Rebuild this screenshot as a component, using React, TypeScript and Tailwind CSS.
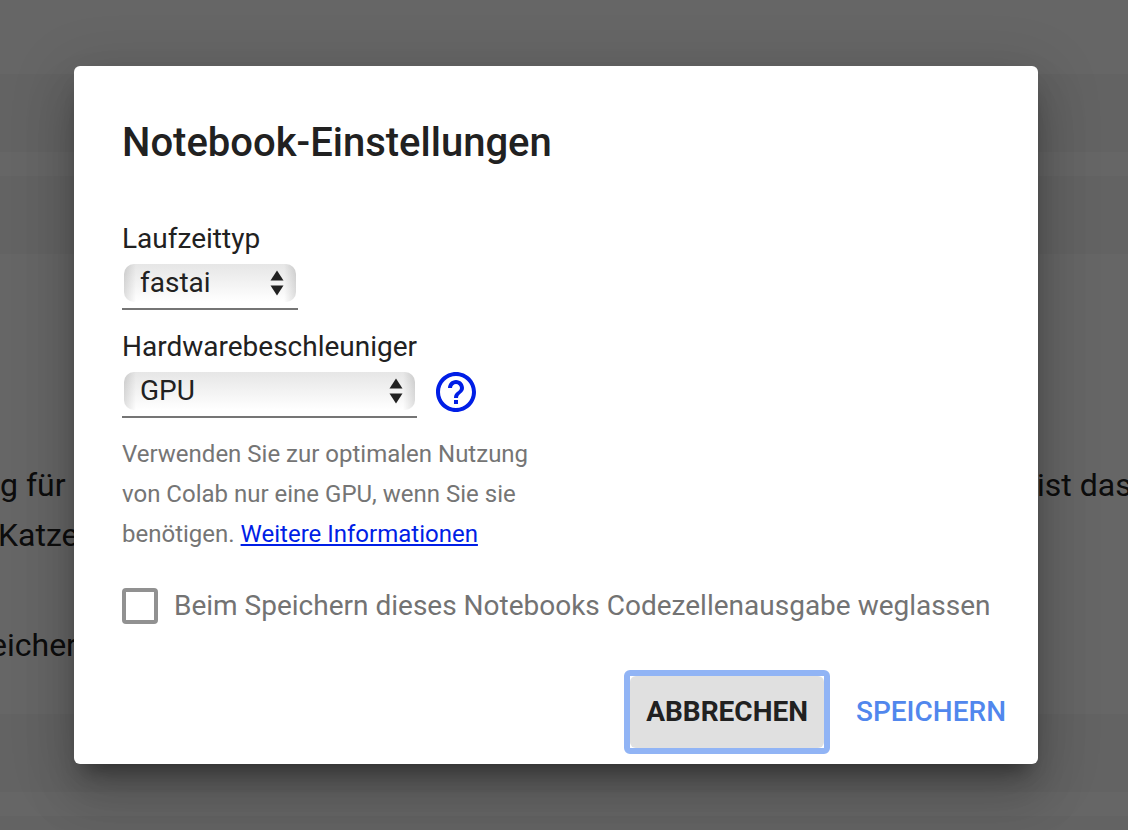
import { MdHelpOutline } from "react-icons/md";

type SelectFieldProps = {
  id: string;
  label: string;
  options: string[];
  widthClass: string;
};

function SelectField({ id, label, options, widthClass }: SelectFieldProps) {
  return (
    <div>
      <label htmlFor={id} className="block text-[28px] leading-[42px]">
        {label}
      </label>
      <div className={`relative border-b-2 border-[#757575] px-[2px] pt-1 pb-[6px] ${widthClass}`}>
        <select
          id={id}
          className="block h-[38px] w-full appearance-none rounded-[10px] bg-[linear-gradient(90deg,rgba(0,0,0,0.12),transparent_12px),linear-gradient(270deg,rgba(0,0,0,0.12),transparent_12px),linear-gradient(180deg,#e6e6e6,#ffffff)] px-4 text-[28px] leading-[38px] text-[#212121]"
        >
          {options.map((option) => (
            <option key={option}>{option}</option>
          ))}
        </select>
        <svg
          viewBox="0 0 14 26"
          className="pointer-events-none absolute top-[10px] right-[14px] h-[26px] w-[14px] fill-[#212121]"
          aria-hidden="true"
        >
          <path d="M7 0.5 L13.5 10.5 H0.5 Z" />
          <path d="M7 25.5 L13.5 15.5 H0.5 Z" />
        </svg>
      </div>
    </div>
  );
}

function NotebookBackdrop() {
  return (
    <div
      className="absolute inset-0 flex flex-col overflow-hidden bg-white text-[32px] leading-[50px] whitespace-nowrap text-[#212121]"
    >
      <div className="mt-[74px] h-[78px] shrink-0 bg-[#f7f7f7]" />
      <div className="mt-6 h-[78px] shrink-0 bg-[#f7f7f7]" />
      <div className="mt-[206px] flex justify-between">
        <span>g für</span>
        <span className="w-[91px] overflow-hidden">ist das</span>
      </div>
      <p className="-ml-0.5">Katze</p>
      <p className="mt-[60px] -ml-2.5">eicher</p>
      <div className="mt-11 h-[78px] shrink-0 bg-[#f7f7f7]" />
      <div className="mt-6 flex-1 bg-[#f7f7f7]" />
    </div>
  );
}

export default function App() {
  return (
    <div className="relative flex min-h-screen flex-col font-[Roboto,sans-serif]">
      <NotebookBackdrop />
      <div className="relative flex flex-1 items-center bg-black/60 pr-[90px] pl-[74px]">
        <div
          role="dialog"
          aria-labelledby="dialog-title"
          className="w-full rounded-[6px] bg-white text-[#212121] shadow-[0_32px_48px_4px_rgba(0,0,0,0.14),0_12px_60px_10px_rgba(0,0,0,0.12),0_16px_20px_-10px_rgba(0,0,0,0.4)]"
        >
          <div className="pt-12 pr-8 pl-12">
            <h2 id="dialog-title" className="text-[40px] leading-[58px] font-medium">
              Notebook-Einstellungen
            </h2>
            <div className="mt-[46px]">
              <SelectField id="runtime" label="Laufzeittyp" options={["fastai"]} widthClass="w-[176px]" />
            </div>
            <div className="mt-4 flex items-end gap-[15px]">
              <SelectField
                id="accelerator"
                label="Hardwarebeschleuniger"
                options={["GPU"]}
                widthClass="w-[295px]"
              />
              <button type="button" aria-label="Hilfe" className="pb-0.5 text-[#001ee6]">
                <MdHelpOutline className="size-12" />
              </button>
            </div>
            <p className="mt-4 max-w-[420px] text-[24px] leading-[40px] text-[#757575]">
              Verwenden Sie zur optimalen Nutzung von Colab nur eine GPU, wenn Sie sie benötigen.{" "}
              <a href="#info" className="text-[#001ee6] underline">
                Weitere Informationen
              </a>
            </p>
            <div className="mt-8 flex items-center gap-4">
              <input
                id="omit-output"
                type="checkbox"
                className="size-9 shrink-0 appearance-none rounded-[4px] border-4 border-[#919191] bg-white"
              />
              <label htmlFor="omit-output" className="text-[28px] leading-[40px] text-[#737373]">
                Beim Speichern dieses Notebooks Codezellenausgabe weglassen
              </label>
            </div>
          </div>
          <div className="mt-11 flex items-center justify-end gap-[10px] pr-4 pb-[10px] text-[28px] leading-[40px]">
            <button type="button" className="rounded-[6px] border-[6px] border-[#91b4f5] font-bold">
              <span className="block rounded-[6px] bg-[#e0e0e0] px-4 py-4">ABBRECHEN</span>
            </button>
            <button type="button" className="px-4 py-4 font-medium text-[#5187ed]">
              SPEICHERN
            </button>
          </div>
        </div>
      </div>
    </div>
  );
}
